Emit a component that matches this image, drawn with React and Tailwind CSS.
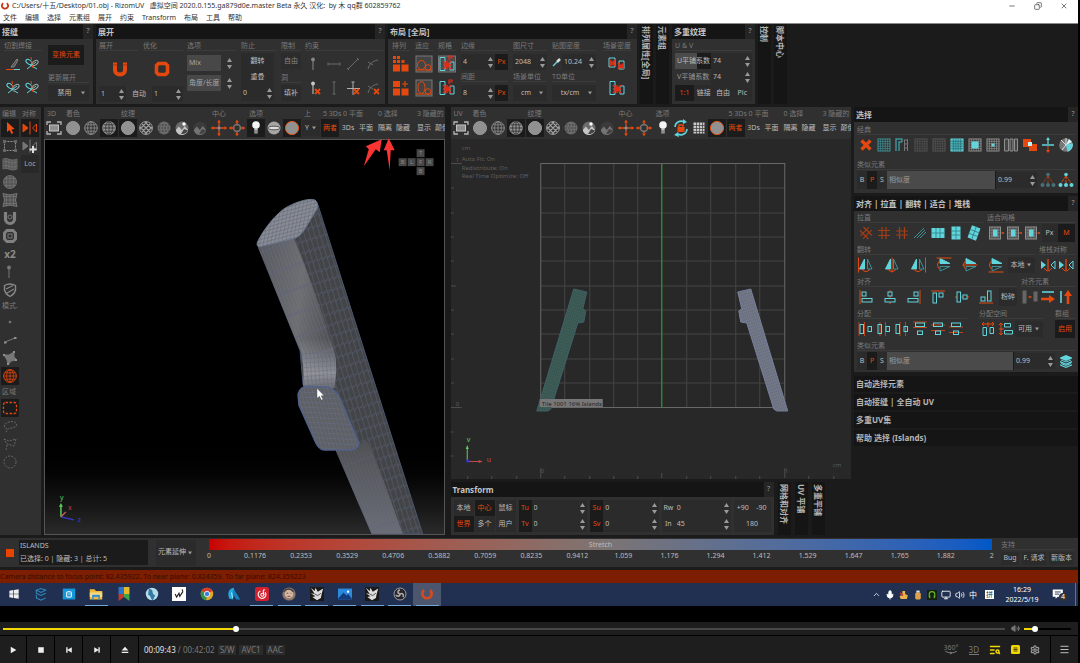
import clsx from 'clsx';
import { Mic, Monitor, Volume2, Settings, Menu, ChevronUp, Minus, Copy, X, TextSearch } from 'lucide-react';

const O = '#e4480e';
const C = '#62d4dc';
const T = '#3f8f96';
const W = '#8f8f8f';
const D = '#666666';

function Svg({ children, className = 'size-[18px]' }) {
  return <svg viewBox="0 0 18 18" className={className} fill="none" strokeWidth="1">{children}</svg>;
}

/* ---------- icon set ---------- */

const meshLines = 'M3 5.5h12M3 9h12M3 12.5h12M5.5 3v12M9 3v12M12.5 3v12';

const Frame = () => (
  <Svg>
    <path d="M2 6V3h4M12 3h4v3M16 12v3h-4M6 15H2v-3" stroke="#b5b5b5" strokeWidth="1.3" />
    <rect x="4.5" y="6" width="9" height="6" fill="#8f8f8f" stroke="#c4c4c4" />
  </Svg>
);
const Disc = ({ ring }) => <Svg><circle cx="9" cy="9" r="6.6" fill="#919191" stroke={ring ? '#e0531c' : '#919191'} /></Svg>;
const Wire = ({ fill = 'none', c = W }) => (
  <Svg>
    <circle cx="9" cy="9" r="6.3" stroke={c} fill={fill} />
    <path d="M2.7 9h12.6M9 2.7v12.6M4 5.8h10M4 12.2h10" stroke={fill === 'none' ? c : '#2c2c2c'} strokeWidth=".8" />
    <ellipse cx="9" cy="9" rx="3.4" ry="6.3" stroke={fill === 'none' ? c : '#2c2c2c'} strokeWidth=".8" />
  </Svg>
);
const Checker = ({ c = '#a0a0a0' }) => (
  <Svg>
    <circle cx="9" cy="9" r="6.4" stroke={c} />
    <path d="M5 5l8 8M3 8l7 7M8 3l7 7M13 5l-8 8M10 3l-7 7M15 8l-7 7" stroke={c} strokeWidth="1.2" />
  </Svg>
);
const Dots = () => (
  <Svg>
    <circle cx="9" cy="9" r="6.5" fill="#6a6a6a" />
    <path d="M4 6h10M3.5 9h11M4 12h10" stroke="#3a3a3a" strokeDasharray="1.5 1.5" />
  </Svg>
);
const Scene = ({ dim }) => (
  <Svg>
    <circle cx="9" cy="9" r="6.5" fill={dim ? '#3b3b3b' : '#6b6b6b'} />
    <path d="M2.8 11l3-3.5 3 3.5 3-4 3.4 4.3A6.5 6.5 0 0 1 3 12z" fill={dim ? '#747474' : '#c5c5c5'} />
    <path d="M8 15l3-5 4 1.5A7 7 0 0 1 8 15z" fill="#444" />
    {!dim && <circle cx="11" cy="5" r="1.7" fill="#fff" />}
  </Svg>
);
const Cross = ({ ring }) => (
  <Svg>
    <path d="M9 1.5v5M9 11.5v5M1.5 9h5M11.5 9h5" stroke={O} strokeWidth="1.3" />
    <path d="M7 3.5L9 1l2 2.5zM7 14.5L9 17l2-2.500zM3.500 7L1 9l2.500 2zM14.500 7L17 9l-2.500 2z" fill={O} />
    {ring ? <circle cx="9" cy="9" r="3.500" stroke="#777" strokeWidth="1.400" /> : <path d="M9 6.500v5M6.500 9h5" stroke="#d6a18b" />}
  </Svg>
);
const Bulb = () => (
  <Svg><circle cx="9" cy="6" r="3.8" fill="#f4f4f4" /><path d="M7.400 9h3.200v5.500h-3.200z" fill="#c9c9c9" /><path d="M7.500 12h3M7.500 14h3" stroke="#555" /></Svg>
);
const Half = () => (
  <Svg><circle cx="9" cy="9" r="6.500" fill="#a5a5a5" /><ellipse cx="9" cy="9" rx="6" ry="1.800" fill="#ddd" stroke="#555" /></Svg>
);
const Lock = () => (
  <Svg>
    <path d="M3 8a6 6 0 0 1 9-5M15 10a6 6 0 0 1-9 5" stroke={C} strokeWidth="1.600" />
    <path d="M11 0l4 3-4 2zM7 18l-5-2 4-3z" fill={C} />
    <rect x="5.500" y="8" width="7" height="5" fill={O} /><path d="M7 8V6h4v2" stroke={O} strokeWidth="1.300" />
  </Svg>
);
const Table = () => <Svg><rect x="3.500" y="3.500" width="11" height="11" fill="#c8c8c8" /><path d="M3 6.500h12M3 9.500h12M3 12.500h12M6.500 3v12M9.500 3v12M12.500 3v12" stroke="#3a3a3a" strokeWidth=".7" /></Svg>;

const Knife = () => <Svg><path d="M2 14.500h8" stroke={O} /><path d="M10 14.500h6" stroke={C} /><path d="M7 12l6-8 1 1-4 7z" stroke="#888" fill="#4a4a4a" /></Svg>;
const Weld = () => (
  <Svg>
    <ellipse cx="6" cy="7" rx="3.500" ry="2" transform="rotate(35 6 7)" stroke={C} />
    <ellipse cx="12" cy="8" rx="3.500" ry="2" transform="rotate(-35 12 8)" stroke="#9aa" />
    <path d="M4 14l9-7M7 10l7 4" stroke={C} /><path d="M8 2l2 12" stroke={O} strokeDasharray="3 1" />
  </Svg>
);

const Unfold = () => <Svg><path d="M4 2.500v7.500a5 4.500 0 0 0 10 0V2.500" stroke={O} strokeWidth="4" /><path d="M2 5h4M12 5h4" stroke="#a8350c" /></Svg>;
const Optimize = () => <Svg><path d="M5.500 3.500h7l2 2v7l-2 2h-7l-2-2v-7z" stroke={O} strokeWidth="3.600" /></Svg>;

const Pin = ({ x, c = '#868686' }) => <Svg><path d="M8 6v9" stroke={c} /><circle cx="8" cy="4.500" r="1.900" fill={c} />{x && <path d="M10 10l5 5M15 10l-5 5" stroke={O} strokeWidth="1.800" />}</Svg>;
const Seg = ({ d, x, c = '#6a6a6a' }) => <Svg><path d={d} stroke={c} />{x && <path d="M10 10l5 5M15 10l-5 5" stroke={O} strokeWidth="1.800" />}</Svg>;

const Pack = ({ plus }) => (
  <Svg>
    <path d="M1 9.500h7v7H1zM9.500 9.500h7v7h-7z" fill={O} />
    {plus ? <path d="M1 2h7v6H1z" fill={O} /> : <path d="M1 1h3v3H1zM5 1h3v3H5zM1 5h3v3H1zM5 5h3v3H5zM9.500 5h3v3h-3z" fill={O} />}
    {plus && <path d="M13 2v6M10 5h6" stroke={O} strokeWidth="1.200" />}
  </Svg>
);
const Fit = ({ big }) => (
  <Svg>
    <rect x="1" y="1" width="16" height="16" fill="#444" stroke="#777" />
    <ellipse cx="6.500" cy={big ? 8.500 : 10} rx={big ? 3.500 : 4} ry={big ? 6 : 4.500} stroke={O} />
    <circle cx="13" cy="12.500" r="2.800" stroke={O} />
    <path d="M1 15h16" stroke={O} />
  </Svg>
);
const Spec = ({ top, frame }) => (
  <Svg>
    {frame && <rect x=".5" y="1" width="17" height="16" fill="#4a4a4a" stroke="#777" />}
    <path d="M2 2.500h5v13H2zM12 7h4v8h-4z" stroke={C} />
    <path d="M5 6l8 8M13 6l-8 8M9 6v8M5 10h8" stroke="#e32b14" strokeWidth="1.500" />
    {top && <path d="M11 5V1h3v2h-3" stroke="#e32b14" strokeWidth="1.200" />}
  </Svg>
);
const Dense = () => (
  <Svg>
    <path d="M1 3h6v9H1zM11 6h5v8h-5z" stroke={C} />
    <path d="M2 5l5 6M7 5l-5 6M2 8h5M10 8l6 6M16 8l-6 6M10 11h6" stroke="#e32b14" strokeWidth="1.600" />
  </Svg>
);

const Pointer = () => <Svg><path d="M6 3v10l2.500-2 2 4 1.800-1-1.800-3.600 3.200-.4z" fill="#f04e12" /></Svg>;
const Mirror = ({ c = O, plus }) => (
  <Svg><path d="M2 5v8l5-4z" fill={c} stroke={c} /><path d="M15.500 5v8l-4-4z" stroke={c} /><path d="M9 2.500v13" stroke={c} />{plus && <path d="M12 9v7M8.500 12.500h7" stroke="#ddd" strokeWidth="2" />}</Svg>
);
const SelBox = () => <Svg><rect x="3.500" y="4.500" width="11" height="9" stroke={W} strokeDasharray="2 1" /><path d="M2 3h3v3H2zM13 3h3v3h-3zM2 12h3v3H2zM13 12h3v3h-3z" fill={D} /></Svg>;
const Flag = () => <Svg><path d="M2 4c5-2 8 3 14 0v10c-6 3-9-2-14 0z" fill="#555" stroke={D} /><path d="M5 3v11M8 4v10M11 5v10M14 5v10M2 7c5-2 8 3 14 0M2 11c5-2 8 3 14 0" stroke="#777" strokeWidth=".7" /></Svg>;
const Ball = () => <Svg><circle cx="9" cy="9" r="6.500" fill="#555" stroke="#6d6d6d" /><path d={meshLines} stroke="#777" strokeWidth=".6" /></Svg>;
const Pinch = () => <Svg><path d="M2 2.500q7 3 14 0q-3 6.500 0 13q-7-3-14 0q3-6.500 0-13z" fill="#505050" stroke="#777" /><path d={meshLines} stroke="#777" strokeWidth=".7" /></Svg>;
const UGrey = () => <Svg><path d="M4.500 3v7a4.500 4.500 0 0 0 9 0V3" stroke="#808080" strokeWidth="3.200" /><circle cx="9" cy="8" r="2" stroke="#777" /></Svg>;
const OGrey = () => <Svg><path d="M6 3.500h6l2.500 2.500v6L12 14.500H6L3.500 12V6z" stroke="#808080" strokeWidth="3" /><rect x="7" y="7" width="4" height="4" stroke="#777" /></Svg>;
const Shield = () => <Svg><path d="M3.500 4.500q5.500-3 11 0v4.500q-1 4-5.500 6.500-4.500-2.500-5.500-6.500z" stroke="#888" strokeWidth="1.400" /><path d="M5 8l7-3.500M6 12l7-4" stroke="#888" strokeWidth="1.200" /></Svg>;
const Vertex = () => <Svg><circle cx="9" cy="9" r="1.300" fill="#777" /></Svg>;
const Edge = () => <Svg><path d="M4 11l10-4" stroke="#777" /><path d="M3 10.500h2.500v2H3zM13 6h2.500v2H13z" fill={W} /></Svg>;
const Poly = () => <Svg><path d="M3 6l5 0 5-3 0 5 3 3-6 1-3 4-1-5z" fill="#777" stroke="#777" /><path d="M2 5h2v2H2zM12 2h2v2h-2zM14 10h2v2h-2zM6 14h2v2H6z" fill={W} /></Svg>;
const Marquee = () => <Svg><rect x="2.500" y="3.500" width="13" height="11" rx="2" stroke={O} strokeWidth="1.300" strokeDasharray="2.500 1.500" /></Svg>;
const Lasso = ({ angular }) => <Svg><path d={angular ? 'M3 4l5 2 7-2-2 7-7-2-3-5M6 10l-1 5' : 'M6 12c-7-3 1-9 7-7s1 7-5 6l-3 4'} stroke={D} strokeDasharray="2 1.200" /></Svg>;
const Ring = () => <Svg><circle cx="9" cy="9" r="6" stroke={D} strokeDasharray="2 1.200" /></Svg>;

const Grid = ({ c = W, core, fill, dot }) => (
  <Svg>
    {fill && <rect x="3" y="3" width="12" height="12" fill={fill} />}
    <rect x="3" y="3" width="12" height="12" stroke={c} />
    <path d="M3 5.400h12M3 7.800h12M3 10.200h12M3 12.600h12M5.400 3v12M7.800 3v12M10.200 3v12M12.600 3v12" stroke={fill ? '#2b6f75' : c} strokeWidth=".7" />
    {core && <rect x="5.500" y="5.500" width="7" height="7" fill={C} />}
    {dot && <rect x="7.500" y="7.500" width="3" height="3" fill={C} />}
  </Svg>
);
const Delete = () => <Svg><path d="M4.500 4.500l9 9M13.500 4.500l-9 9" stroke={O} strokeWidth="3.200" /></Svg>;
const GrowEdge = () => <Svg><path d="M3 15V3h6v3M6 15V6h3" stroke={T} strokeWidth="1.500" /><path d="M11.500 15V4M14.500 15V3M11 4h4M11 8h4M11 12h4" stroke="#777" /></Svg>;
const Cols = () => <Svg><path d="M2.500 3h4v12h-4zM8 3h3v12H8zM12.500 3h3v12h-3z" stroke={W} fill="#444" /></Svg>;
const Overlap = () => <Svg><path d="M2 3h8v8H2zM8 8h8v7H8z" fill={O} /><rect x="7" y="6" width="4" height="4" fill="#bff4f7" /></Svg>;
const Split = () => <Svg><path d="M3 9h12M9 2v6" stroke={C} strokeWidth="1.300" /><path d="M9 10v5" stroke={O} /><path d="M7 4l2-3 2 3z" fill={C} /><path d="M7 14l2 3 2-3z" fill={O} /></Svg>;
const Pie = () => <Svg><circle cx="9" cy="9" r="6.800" fill="#777" /><path d="M9 9L4 4M9 9v-7M9 9h7M9 9l-4 5" stroke="#ddd" /><path d="M9 9l6.500-2a6.800 6.800 0 0 1-5 8.700z" fill={C} /><path d="M9 9l3-6 3 3z" fill="#d8fafa" /></Svg>;
const Tree = ({ dim }) => <Svg><path d="M9 5L4 12M9 5v7M9 5l5 7" stroke={O} strokeDasharray="3 1" opacity={dim ? .6 : 1} /><g fill={dim ? '#467075' : C}><circle cx="9" cy="3.500" r="1.800" /><circle cx="3.500" cy="14" r="2" /><circle cx="9" cy="14" r="2" /><circle cx="14.500" cy="14" r="2" /></g></Svg>;

const Hash = ({ r = 0, c = '#a43c16' }) => <Svg><g transform={`rotate(${r} 9 9)`} stroke={c} strokeWidth="1.200"><path d="M3 6.500h12M3 11.500h12" /><path d="M7 3v12M11 3v12" /></g></Svg>;
const Hatch = () => <Svg><path d="M3 14L13 4M6 14l8-8M9 14l6-6" stroke={T} /></Svg>;
const Block = ({ v, r = 0 }) => <Svg><g transform={`rotate(${r} 9 9)`}><rect x={v ? 4.500 : 2.500} y={v ? 2.500 : 4} width={v ? 9 : 13} height={v ? 13 : 10} fill={C} /><path d={v ? 'M9 2v14M4 7h10M4 11h10' : 'M2 9h14M7 4v10M11 4v10'} stroke="#2e8087" strokeWidth=".8" /></g></Svg>;
const FitGrid = () => <Svg><rect x="2.500" y="3" width="11" height="12" stroke={W} fill="#4b4b4b" /><path d="M2 6h12M2 9h12M2 12h12M5 3v12M8 3v12M11 3v12" stroke={W} strokeWidth=".6" /><rect x="6" y="5.500" width="4.500" height="7" fill={C} /><path d="M14.500 9h2.500" stroke={O} strokeWidth="1.600" /></Svg>;
const FlipI = ({ r = 0, x = 9 }) => (
  <Svg>
    <g transform={`rotate(${r} 9 9)`}>
      <path d="M7.500 3v10H2.500z" fill={C} stroke={C} /><path d="M10.500 3v10h4.500z" stroke={T} />
      <path d={`M${x} 1.500v15`} stroke={O} /><path d="M5 13.500q4 4 8 0" stroke={O} />
    </g>
  </Svg>
);
const StackI = () => <Svg><path d="M2 5v8l5-4z" fill={C} /><path d="M16 5v8l-4-4z" stroke={C} /><path d="M9 3v11" stroke={O} strokeWidth="1.300" /><path d="M5 12q4 6 8 0" stroke={O} /></Svg>;
const AlignI = ({ r = 0, x = 3 }) => (
  <Svg><g transform={`rotate(${r} 9 9)`}><path d={`M${x} 2v14`} stroke={O} /><g transform={x > 10 ? 'matrix(-1 0 0 1 18 0)' : undefined}><rect x={x > 5 && x < 10 ? 7 : 5} y="4" width="4" height="4" stroke={C} fill="#303030" /><rect x={x > 5 && x < 10 ? 4 : 5} y="10.500" width="10" height="3.500" stroke={C} fill="#303030" /></g></g></Svg>
);
const SpreadI = ({ r = 0, dx = 0 }) => <Svg><g transform={`rotate(${r} 9 9)`}><path d={`M${7 + dx} 2v14M${12.500 + dx} 2v14`} stroke={O} strokeWidth=".8" /><rect x="3" y="4.500" width="3.500" height="9" stroke={C} /><rect x="11" y="6.500" width="3.500" height="5" stroke={C} /></g></Svg>;
const SpaceI = ({ r = 0 }) => <Svg><g transform={`rotate(${r} 9 9)`}><path d="M3 4h12M5 2L3 4l2 2M9 2v5M13 2l2 2-2 2" stroke={O} /><path d="M4 7.500h3.500v8H4zM11 7.500h3.500v6H11z" stroke={C} /></g></Svg>;
const MatchI = () => <Svg><path d="M1.500 2.500h4v13h-4zM12.500 3.500h4v10h-4z" fill="#666" /><path d="M7.500 9h3" stroke={O} strokeWidth="1.500" /></Svg>;
const ArrowI = ({ r = 0 }) => <Svg><g transform={`rotate(${r} 9 9)`}><path d="M3 4h12" stroke={C} strokeWidth="1.600" /><path d="M2 11h9" stroke={O} strokeWidth="2.600" /><path d="M10 7l6 4-6 4z" fill={O} /></g></Svg>;
const Layers = () => <Svg><path d="M3 5.500L9 3l6 2.500v1L9 9 3 6.500zM3 9l6 2.500L15 9v1.500L9 13l-6-2.500zM3 12.300l6 2.500 6-2.500v1.200L9 16l-6-2.500z" fill={C} /><path d="M4 8l5 2 5-2M4 11.500l5 2 5-2" stroke={C} /></Svg>;

/* ---------- shared controls ---------- */

function Tool({ label, on, className, children }) {
  return (
    <button aria-label={label} className={clsx('flex h-[18px] w-[18px] shrink-0 items-center justify-center whitespace-nowrap text-[7px]', on && 'bg-[#1b1b1b]', className)}>
      {children}
    </button>
  );
}

function Btn({ on, className, children }) {
  return (
    <button className={clsx('flex h-4 shrink-0 items-center justify-center whitespace-nowrap text-[7px]', on ? 'bg-[#1b1b1b] text-[#e4480e]' : 'bg-[#2b2b2b] text-[#bdbdbd]', className)}>
      {children}
    </button>
  );
}

function Label({ className, children }) {
  return (
    <div className={clsx('h-2.5 border-b border-[#3b3b3b] text-[7px] leading-[9px] whitespace-nowrap text-[#7a7a7a]', className)}>
      {children}
    </div>
  );
}

function Arrows() {
  return (
    <span className="flex shrink-0 flex-col gap-[3px] px-0.5">
      <button aria-label="Increase"><svg viewBox="0 0 5 4" className="block h-1 w-[5px]"><path d="M0 4L2.500 0 5 4z" fill="#9a9a9a" /></svg></button>
      <button aria-label="Decrease"><svg viewBox="0 0 5 4" className="block h-1 w-[5px]"><path d="M0 0L2.500 4 5 0z" fill="#9a9a9a" /></svg></button>
    </span>
  );
}

function NumberBox({ label, value, className }) {
  return (
    <div className={clsx('flex h-4 items-center bg-[#2b2b2b] pl-0.5', className)}>
      <input aria-label={label} defaultValue={value} className="w-0 min-w-0 flex-1 bg-transparent text-[7px] text-[#bdbdbd]" />
      <Arrows />
    </div>
  );
}

function Select({ label, value, className }) {
  return (
    <div className={clsx('flex h-4 items-center bg-[#2b2b2b]', className)}>
      <select aria-label={label} className="h-4 w-0 min-w-0 flex-1 appearance-none bg-transparent text-center text-[7px] text-[#bdbdbd]">
        <option>{value}</option>
      </select>
      <svg viewBox="0 0 5 4" className="mr-1 h-1 w-1 shrink-0"><path d="M0 0L2.500 4 5 0z" fill="#9a9a9a" /></svg>
    </div>
  );
}

function Header({ title }) {
  return (
    <div className="flex h-[15px] shrink-0 items-center justify-between bg-[#151515] pl-0.5">
      <h2 className="text-[8px] font-bold whitespace-nowrap text-[#c4c4c4]">{title}</h2>
      <button className="h-full w-2.5 bg-[#252525] text-[7px] text-[#9a9a9a]">?</button>
    </div>
  );
}

function Panel({ title, className, children }) {
  return (
    <section className={clsx('flex shrink-0 flex-col bg-[#303030]', className)}>
      <Header title={title} />
      {children}
    </section>
  );
}

function SideTab({ children }) {
  return (
    <button className="flex w-[13px] shrink-0 items-center bg-[#151515] pt-0.5 text-[8px] leading-[13px] font-bold whitespace-nowrap text-[#b5b5b5] [text-orientation:sideways] [writing-mode:vertical-rl]">
      {children}
    </button>
  );
}

/* ---------- top area ---------- */

const MENUS = ['文件', '编辑', '选择', '元素组', '展开', '约束', 'Transform', '布局', '工具', '帮助'];

function TitleBar() {
  return (
    <header className="h-6 shrink-0 border-b border-[#8a8a8a] bg-white text-[#333]">
      <div className="flex h-3 items-center gap-[3px]">
        <svg viewBox="0 0 18 18" className="ml-px h-2.5 w-2 shrink-0" fill="none"><path d="M5 3a7 6.500 0 1 0 8 0" stroke="#c73515" strokeWidth="4" /></svg>
        <h1 className="flex-1 text-[7px] leading-3 whitespace-pre">C:/Users/十五/Desktop/01.obj - RizomUV   虚拟空间 2020.0.155.ga879d0e.master Beta 永久 汉化:  by 木 qq群 602859762</h1>
        <div className="mr-2.5 flex gap-[18px]">
          <button aria-label="Minimize"><Minus size={8} strokeWidth={2} /></button>
          <button aria-label="Restore"><Copy size={8} strokeWidth={2} className="-scale-x-100" /></button>
          <button aria-label="Close"><X size={8} strokeWidth={2} /></button>
        </div>
      </div>
      <nav className="flex h-[11px] items-center gap-2 pl-[3px] text-[7px]">
        {MENUS.map((m) => <button key={m} className="leading-[10px]">{m}</button>)}
      </nav>
    </header>
  );
}

function SeamPanel() {
  return (
    <Panel title="接缝" className="w-[93px]">
      <div className="flex justify-between pt-0.5 pr-1 pl-1">
        <div className="w-[38px]">
          <Label>切割焊接</Label>
          <div className="grid grid-cols-2 gap-y-1.5 pt-1">
            <Tool label="Cut"><Knife /></Tool>
            <Tool label="Weld"><Weld /></Tool>
            <Tool label="Cut all"><Weld /></Tool>
            <Tool label="Weld all"><Weld /></Tool>
          </div>
        </div>
        <div className="w-[41px]">
          <Btn on className="mt-1 h-5 w-9">变换元素</Btn>
          <Label className="mt-2">更新展开</Label>
          <Select label="更新展开" value="禁用" className="mt-0.5" />
        </div>
      </div>
    </Panel>
  );
}

function UnfoldPanel() {
  return (
    <Panel title="展开" className="w-[289px]">
      <div className="flex gap-1 pt-0.5 pr-0.5 pl-[3px]">
        <div className="w-[84px]">
          <div className="flex gap-1">
            <Label className="flex-1">展开</Label>
            <Label className="flex-1">优化</Label>
          </div>
          <div className="flex h-[35px] items-center">
            <Tool label="展开" className="flex-1"><Unfold /></Tool>
            <Tool label="优化" className="flex-1"><Optimize /></Tool>
          </div>
          <div className="flex items-center">
            <NumberBox label="展开" value="1" className="w-[27px]" />
            <span className="mx-1.5 text-[7px] text-[#bdbdbd]">自动</span>
            <NumberBox label="优化" value="1" className="flex-1" />
          </div>
        </div>
        <div className="w-[50px] space-y-1">
          <Label>选项</Label>
          {['Mix', '角度/长度'].map((v) => (
            <div key={v} className="flex h-4 items-center gap-1">
              <select aria-label="选项" className="h-4 w-[34px] appearance-none bg-[#484848] pl-0.5 text-[7px] text-[#a5a5a5]"><option>{v}</option></select>
              <Arrows />
            </div>
          ))}
        </div>
        <div className="w-9">
          <Label>防止</Label>
          <Btn className="mt-0.5 w-[33px]">翻转</Btn>
          <Btn className="w-[33px]">重叠</Btn>
          <NumberBox label="防止" value="0" className="w-[33px]" />
        </div>
        <div className="w-5">
          <Label>限制</Label>
          <Btn className="mt-0.5 w-full opacity-60">自由</Btn>
          <Label className="mt-1">洞</Label>
          <Btn className="mt-0.5 w-full">填补</Btn>
        </div>
        <div className="flex-1">
          <Label>约束</Label>
          <div className="grid grid-cols-4 gap-y-1.5 pt-1">
            <Tool label="Pin"><Pin /></Tool>
            <Tool label="Horizontal"><Seg d="M3 9h12M3 7.500v3M15 7.500v3" /></Tool>
            <Tool label="Diagonal"><Seg d="M4 14L14 4M3 13l2 2M13 3l2 2" /></Tool>
            <Tool label="Angle"><Seg d="M4 14Q6 6 14 5M4 7l5 3" /></Tool>
            <Tool label="Unpin"><Pin x c="#c8c8c8" /></Tool>
            <Tool label="Vertical"><Seg d="M9 3v12M7.500 3h3M7.500 15h3" /></Tool>
            <Tool label="Free axes"><Seg d="M9 3v13M3 9.500h13M7.500 3h3" x c="#b0b0b0" /></Tool>
            <Tool label="Free angle"><Seg d="M4 14Q6 6 14 5M4 7l5 3" x /></Tool>
          </div>
        </div>
      </div>
    </Panel>
  );
}

function IconPair({ label, a, b, className }) {
  return (
    <div className={className}>
      <Label>{label}</Label>
      <div className="space-y-1.5 pt-1">
        <Tool label={label}>{a}</Tool>
        <Tool label={`${label} 2`}>{b}</Tool>
      </div>
    </div>
  );
}

function PackPanel() {
  return (
    <Panel title="布局 [全局]" className="w-[249px]">
      <div className="flex gap-[5px] pt-0.5 pr-1 pl-1">
        <IconPair label="排列" a={<Pack />} b={<Pack plus />} className="w-[18px]" />
        <IconPair label="适应" a={<Fit />} b={<Fit big />} className="w-[18px]" />
        <IconPair label="规格" a={<Spec top frame />} b={<Spec top />} className="w-[18px]" />
        <div className="w-[47px]">
          <Label>边缘</Label>
          <div className="flex pt-[3px]"><NumberBox label="边缘" value="4" className="flex-1" /><Btn on className="w-[13px]">Px</Btn></div>
          <Label className="mt-0.5">间距</Label>
          <div className="flex pt-[3px]"><NumberBox label="间距" value="8" className="flex-1" /><Btn on className="w-[13px]">Px</Btn></div>
        </div>
        <div className="w-[34px]">
          <Label>图尺寸</Label>
          <NumberBox label="图尺寸" value="2048" className="mt-[3px]" />
          <Label className="mt-0.5">场景单位</Label>
          <Select label="场景单位" value="cm" className="mt-[3px]" />
        </div>
        <div className="w-[44px]">
          <Label>贴图密度</Label>
          <div className="mt-[3px] flex items-center">
            <svg viewBox="0 0 10 10" className="size-2.5 shrink-0"><path d="M1 9l4-4" stroke={C} strokeWidth="1.500" /><path d="M5 5l3-3" stroke="#ddd" strokeWidth="2.500" /></svg>
            <NumberBox label="贴图密度" value="10.24" className="flex-1" />
          </div>
          <Label className="mt-0.5">TD单位</Label>
          <Select label="TD单位" value="tx/cm" className="mt-[3px]" />
        </div>
        <IconPair label="场景密度" a={<Dense />} b={<Spec />} className="flex flex-1 flex-col items-center" />
      </div>
    </Panel>
  );
}

function TexturePanel() {
  return (
    <Panel title="多重纹理" className="w-[83px]">
      <div className="px-[3px] pt-0.5 text-[7px] text-[#bdbdbd]">
        <Label>U &amp; V</Label>
        <div className="mt-0.5 flex h-4 items-center">
          <span className="w-9 bg-linear-to-r from-[#4b4b4b] from-60% to-[#1b1b1b] to-60% pl-0.5 leading-4 whitespace-nowrap">U平铺系数</span>
          <NumberBox label="U平铺系数" value="74" className="flex-1" />
        </div>
        <div className="flex h-4 items-center">
          <span className="w-9 pl-0.5 leading-4 whitespace-nowrap text-[#999]">V平铺系数</span>
          <NumberBox label="V平铺系数" value="74" className="flex-1" />
        </div>
        <div className="flex">
          <Btn on className="w-[19px]">1:1</Btn>
          <Btn className="flex-1">链接</Btn>
          <Btn className="flex-1">自由</Btn>
          <Btn className="flex-1">Pic</Btn>
        </div>
      </div>
    </Panel>
  );
}

/* ---------- viewports ---------- */

function ToolGroup({ label, className, children }) {
  return (
    <div className={clsx('shrink-0', className)}>
      <div className="h-3 pl-0.5 text-[7px] leading-[13px] whitespace-nowrap text-[#7a7a7a]">{label}</div>
      <div className="flex">{children}</div>
    </div>
  );
}

function ViewTools({ uv }) {
  return (
    <div className="flex h-8 shrink-0 gap-px overflow-hidden bg-[#303030] px-px text-[#bdbdbd]">
      <ToolGroup label={uv ? 'UV' : '3D'}><Tool label="Frame"><Frame /></Tool></ToolGroup>
      <ToolGroup label="着色">
        <Tool label="Shaded"><Disc /></Tool>
        <Tool label="Wireframe"><Wire /></Tool>
        <Tool label="Shaded wireframe" on><Wire fill="#929292" /></Tool>
      </ToolGroup>
      <ToolGroup label="纹理">
        <Tool label="No texture" on><Disc /></Tool>
        <Tool label="Checker"><Checker /></Tool>
        <Tool label="Dots"><Dots /></Tool>
        <Tool label="Image"><Scene /></Tool>
        <Tool label="Image only"><Scene dim /></Tool>
      </ToolGroup>
      <ToolGroup label="中心">
        <Tool label="Center"><Cross /></Tool>
        <Tool label="Center selection"><Cross ring /></Tool>
      </ToolGroup>
      <ToolGroup label="选项">
        <Tool label="Light" on={!uv}><Bulb /></Tool>
        {uv ? <Tool label="Sync lock"><Lock /></Tool> : <Tool label="Half"><Half /></Tool>}
        {uv && <Tool label="Grid"><Table /></Tool>}
        <Tool label="Silhouette" on><Disc ring /></Tool>
      </ToolGroup>
      {!uv && <ToolGroup label="上"><Select label="上" value="Y" className="mt-px w-[18px]" /></ToolGroup>}
      <ToolGroup label="5 3Ds 0 平面">
        <Tool on className="text-[#e4480e]">两者</Tool>
        <Tool>3Ds</Tool>
        <Tool>平面</Tool>
      </ToolGroup>
      <ToolGroup label="0 选择" className="w-[38px]"><Tool>隔离</Tool><Tool className="w-5">隐藏</Tool></ToolGroup>
      <ToolGroup label="3 隐藏的"><Tool className="w-4">显示</Tool><Tool className="w-4">颠倒</Tool></ToolGroup>
    </div>
  );
}

const CUBE = [['T', 417, 148], ['B', 399, 157], ['L', 408, 157], ['F', 417, 157], ['R', 426, 157], ['B', 417, 166]];
const BODY = 'M318 204L423 534H372L336 450 303 384 300 350 258 246 296 234z';
const FRONT = 'M257 244L293 236Q303 258 324 318L336 355V388L303 386Q305 372 301 352z';
const BUMP = 'M298 394Q300 386 308 386L328 387Q337 390 341 400L359 443Q359 449 352 450H324Q319 449 316 443L299 405z';

function View3D() {
  return (
    <div className="flex min-w-0 flex-1 flex-col">
      <ViewTools />
      <div className="flex min-h-0 flex-1 border border-[#555] bg-linear-to-b from-black from-75% to-[#2a2a2a]">
        <svg viewBox="44 139 400 395" className="h-full w-full overflow-visible" preserveAspectRatio="xMidYMid meet">
          <defs>
            <linearGradient id="front" x1="0" y1="0" x2="1" y2="0.2">
              <stop offset="0" stopColor="#56585f" /><stop offset="0.600" stopColor="#6d6e72" /><stop offset="1" stopColor="#515257" />
            </linearGradient>
            <linearGradient id="low" x1="0" y1="0" x2="0" y2="1">
              <stop offset="0" stopColor="#505155" /><stop offset="1" stopColor="#6a6d77" />
            </linearGradient>
            <linearGradient id="bend" x1="0" y1="0" x2="0" y2="1">
              <stop offset="0" stopColor="#a5a8b0" stopOpacity="0" /><stop offset="0.700" stopColor="#b5b8be" stopOpacity=".6" /><stop offset="1" stopColor="#a0a3ab" stopOpacity=".3" />
            </linearGradient>
            <pattern id="sideMesh" width="5" height="11" patternUnits="userSpaceOnUse" patternTransform="rotate(-17.400)">
              <path d="M0 0V11" stroke="#667083" strokeWidth=".7" /><path d="M0 3l5-3" stroke="#58627a" strokeWidth=".7" />
            </pattern>
            <pattern id="frontMesh" width="3.500" height="23" patternUnits="userSpaceOnUse" patternTransform="rotate(-20)">
              <path d="M0 0V23" stroke="#7b7f8a" strokeWidth=".5" /><path d="M0 4h4" stroke="#5b657e" strokeWidth=".8" />
            </pattern>
            <pattern id="capMesh" width="4" height="3.500" patternUnits="userSpaceOnUse" patternTransform="rotate(-15) skewX(-25)">
              <rect width="4" height="3.500" fill="#888b93" /><path d="M0 0h4M0 0v3.500" stroke="#5d6474" strokeWidth=".9" />
            </pattern>
            <pattern id="bendMesh" width="4" height="4.500" patternUnits="userSpaceOnUse" patternTransform="rotate(-4)">
              <path d="M0 0h4M0 0v4.500" stroke="#5d6577" strokeWidth=".7" />
            </pattern>
            <pattern id="bumpMesh" width="4" height="5" patternUnits="userSpaceOnUse" patternTransform="rotate(3) skewX(20)">
              <path d="M0 0h4M0 0v5" stroke="#6a7692" strokeWidth=".6" />
            </pattern>
          </defs>
          <path d={BODY} fill="#424447" />
          <path d={BODY} fill="url(#sideMesh)" stroke="#4a566e" />
          <path d={FRONT} fill="url(#front)" />
          <path d={FRONT} fill="url(#frontMesh)" />
          <path d="M299 342q16-6 32-4l5 22q1 14-2 28l-31-2q2-22-4-44z" fill="url(#bend)" />
          <path d="M301 352q16-6 33-3l2 12q0 18-4 28l-29-3q2-18-2-34z" fill="url(#bendMesh)" />
          <path d="M257 242C262 230 277 211 287 206C298 200 310 197 315 199Q319 202 317 208L304 229Q299 237 292 238L259 246Q256 245 257 242z" fill="url(#capMesh)" stroke="#6c7890" />
          <path d="M336 450L358 449Q362 439 368 442 374 452 403 534H372z" fill="url(#low)" />
          <path d="M336 450L358 449 372 452 403 534H372z" fill="url(#frontMesh)" opacity=".5" />
          <path d={BUMP} fill="#5e6065" />
          <path d={BUMP} fill="url(#bumpMesh)" stroke="#516187" strokeWidth="1.500" />
          <path d="M317 388v10l2.500-2 2 4 1.500-1-1.800-3.500h3z" fill="#fff" stroke="#444" strokeWidth=".4" />
          <g fill="#fb3434">
            <path d="M382 138L380 151 376 148 364 165 369 148 366 145z" />
            <path d="M389 137L395 149H391L390 169 387 149H384z" />
          </g>
          {CUBE.map(([t, x, y], i) => (
            <g key={i}>
              <rect x={x} y={y} width="8" height="8" fill="#484848" />
              <text x={x + 4} y={y + 6} textAnchor="middle" fontSize="6" fill="#8a8a8a">{t}</text>
            </g>
          ))}
          <path d="M60 517V506" stroke="#5ecb5e" strokeWidth="1.500" /><path d="M58 507l2-4 2 4z" fill="#5ecb5e" />
          <path d="M60 517l13 3" stroke="#3939d0" strokeWidth="1.300" /><path d="M60 517l5-5" stroke="#d86060" strokeWidth="1.300" />
          <text x="59" y="500" fontSize="7" fill="#5ecb5e">y</text>
          <text x="77" y="522" fontSize="7" fill="#3939d0">z</text>
          <text x="67" y="510" fontSize="7" fill="#c83838">x</text>
        </svg>
      </div>
    </div>
  );
}

const GRID_X = [564, 589, 613, 637, 686, 710, 735, 759];
const GRID_Y = [188, 213, 237, 261, 286, 310, 334, 359, 383];
const ISLAND = 'M573 289L586 292 582 309 585 311 583 322 577 323 550 409 547 411H536L540 398z';

function ViewUV() {
  return (
    <div className="flex min-h-0 flex-1 flex-col">
      <ViewTools uv />
      <div className="flex min-h-0 flex-1 bg-[#282828]">
        <svg viewBox="450 139 401 340" className="h-full w-full" preserveAspectRatio="xMidYMid slice" fontSize="6" fill="#5e5e5e">
          <defs>
            <pattern id="isle" width="2" height="3" patternUnits="userSpaceOnUse" patternTransform="rotate(18)"><path d="M0 0v3M0 0h2" stroke="#456a6c" strokeWidth=".6" /></pattern>
            <pattern id="isle2" width="2" height="3" patternUnits="userSpaceOnUse" patternTransform="rotate(18)"><path d="M0 0v3M0 0h2" stroke="#8089a3" strokeWidth=".6" /></pattern>
          </defs>
          <path d={GRID_X.map((x) => `M${x} 164v243`).join('') + GRID_Y.map((y) => `M540 ${y}h244`).join('')} stroke="#454545" />
          <rect x="540" y="163.500" width="244" height="244" fill="none" stroke="#686868" />
          <path d="M661 164v244" stroke="#2f8f35" strokeWidth="1.300" />
          <path d={ISLAND} fill="#38544d" /><path d={ISLAND} fill="url(#isle)" stroke="#3f6169" />
          <g transform="matrix(-1 0 0 1 1323 0)"><path d={ISLAND} fill="#6a6e7a" /><path d={ISLAND} fill="url(#isle2)" stroke="#757f9b" /></g>
          <rect x="539" y="399" width="63" height="8" fill="#777" />
          <text x="541" y="406" fill="#222">Tile 1001 16%  Islands</text>
          <text x="461" y="150">cm</text>
          <text x="461" y="161">Auto Fit: On</text>
          <text x="461" y="169.500">Redistribute: On</text>
          <text x="461" y="178">Real Time Optimize: Off</text>
          <text x="455" y="162">1</text>
          <text x="455" y="406">0</text>
          <text x="540" y="473">0</text><text x="784" y="473">1</text><text x="832" y="467">cm</text>
          <path d="M450 163.500h11M450 407.500h11M450 188h3M450 213h3M450 237h3M450 261h3M450 286h5M450 310h3M450 334h3M450 359h3M450 383h3M450 432h3M450 456h3M540 468v10M661 473v5M784 468v10M467 476v3M491 476v3M516 476v3M564 476v3M589 476v3M613 476v3M637 476v3M686 476v3M710 476v3M735 476v3M759 476v3M808 476v3M833 476v3" stroke="#4d4d4d" />
          <path d="M466.500 461V448" stroke="#5fd05f" /><path d="M465 449l1.500-4 1.500 4z" fill="#5fd05f" />
          <path d="M467 461.500h12" stroke="#c24c4c" /><path d="M478 460l4 1.500-4 1.500z" fill="#c24c4c" />
          <circle cx="467" cy="461" r="1.700" fill="#3434c8" />
          <text x="466" y="442" fill="#5fd05f" fontSize="7">v</text><text x="486" y="462" fill="#c24c4c" fontSize="7">u</text>
        </svg>
      </div>
    </div>
  );
}

const AXES = [['Tu', '0', 'Tv', '0', true], ['Su', '0', 'Sv', '0', true], ['Rw', '0', 'In', '45', false]];

function TransformPanel() {
  return (
    <div className="flex h-[53px] shrink-0 gap-1">
      <Panel title="Transform" className="w-[323px]">
        <div className="flex flex-1 items-center gap-[3px] px-[3px]">
          <div className="grid w-[62px] grid-cols-3 gap-x-px">
            <Btn>本地</Btn><Btn on>中心</Btn><Btn>鼠标</Btn>
            <Btn on>世界</Btn><Btn>多个</Btn><Btn>用户</Btn>
          </div>
          {AXES.map(([a, av, b, bv, on]) => (
            <div key={a} className="grid flex-1 grid-cols-[13px_1fr]">
              <Btn on={on}>{a}</Btn><NumberBox label={a} value={av} />
              <Btn on={on}>{b}</Btn><NumberBox label={b} value={bv} />
            </div>
          ))}
          <div className="grid w-[37px] grid-cols-2">
            <Btn>+90</Btn><Btn>-90</Btn>
            <Btn className="col-span-2">180</Btn>
          </div>
        </div>
      </Panel>
      <SideTab>网格和对齐</SideTab>
      <SideTab>UV 平铺</SideTab>
      <SideTab>多重平铺</SideTab>
    </div>
  );
}

/* ---------- left tools ---------- */

const EDIT = [[<Pointer />, true], [<SelBox />], [<Flag />], [<Ball />], [<Pinch />], [<UGrey />], [<OGrey />]];
const MODES = [[<Vertex />], [<Edge />], [<Poly />], [<Wire c={O} />, true]];
const AREAS = [[<Marquee />, true], [<Lasso />], [<Lasso angular />], [<Ring />]];

function LeftTools() {
  return (
    <aside className="flex w-[41px] shrink-0 gap-0.5 bg-[#303030] pl-px text-[7px] text-[#7a7a7a]">
      <div className="w-[18px]">
        <div className="h-3 pl-px leading-[13px]">编辑</div>
        {EDIT.map(([icon, on], i) => <Tool key={i} label={`Edit ${i + 1}`} on={on}>{icon}</Tool>)}
        <Tool><span className="text-[10px] font-bold text-[#8a8a8a]">x2</span></Tool>
        <Tool label="Pin"><Pin c="#777" /></Tool>
        <Tool label="Protect"><Shield /></Tool>
        <div className="h-[14px] pl-px leading-[14px] whitespace-nowrap">模式.</div>
        {MODES.map(([icon, on], i) => <Tool key={i} label={`Mode ${i + 1}`} on={on}>{icon}</Tool>)}
        <div className="h-[14px] pl-px leading-[14px]">区域</div>
        {AREAS.map(([icon, on], i) => <Tool key={i} label={`Area ${i + 1}`} on={on}>{icon}</Tool>)}
      </div>
      <div className="w-[18px]">
        <div className="h-3 pl-px leading-[13px]">对称</div>
        <Tool label="Symmetry" on><Mirror /></Tool>
        <Tool label="Add symmetry"><Mirror c="#777" plus /></Tool>
        <Tool className="bg-[#292929] text-[#aaa]">Loc</Tool>
      </div>
    </aside>
  );
}

/* ---------- right column ---------- */

function Similar({ children }) {
  return (
    <div className="flex h-[18px] items-center text-[7px] text-[#bdbdbd]">
      <Btn className="h-[18px] w-2.5">B</Btn>
      <Btn on className="h-[18px] w-2.5">P</Btn>
      <Btn className="h-[18px] w-2.5">S</Btn>
      <label className="relative h-[18px] flex-1">
        <input type="range" min="0" max="1" step="0.01" defaultValue="1" className="block h-[18px] w-full appearance-none bg-[#4a4a4a] [&::-webkit-slider-thumb]:h-[18px] [&::-webkit-slider-thumb]:w-px [&::-webkit-slider-thumb]:appearance-none [&::-webkit-slider-thumb]:bg-[#1b1b1b]" />
        <span className="pointer-events-none absolute inset-y-0 left-0.5 leading-[18px] text-[#9a9a9a]">相似度</span>
      </label>
      <NumberBox label="相似度" value="0.99" className="mr-0.5 w-[41px]" />
      {children}
    </div>
  );
}

const CLASSIC = [
  <Delete />, <Grid c={T} />, <GrowEdge />, <Grid c="#505050" />, <Grid c="#555" />, <Grid c={C} fill="#49b3bb" />,
  <Grid core />, <Grid dot />, <Cols />, <Overlap />, <Split />, <Pie />,
];
const COLLAPSED = ['自动选择元素', '自动接缝 | 全自动 UV', '多重UV集', '帮助 选择 (Islands)'];

function IconRow({ icons, name, className }) {
  return (
    <div className={clsx('flex', className)}>
      {icons.map((icon, i) => <Tool key={i} label={`${name} ${i + 1}`}>{icon}</Tool>)}
    </div>
  );
}

function Split2({ a, b, left, right, width }) {
  return (
    <div className="flex gap-1">
      <div className="min-w-0 flex-1"><Label className="mb-px">{a}</Label>{left}</div>
      <div className={clsx('shrink-0', width)}><Label className="mb-px">{b}</Label>{right}</div>
    </div>
  );
}

function RightColumn() {
  return (
    <aside className="flex w-[224px] shrink-0 flex-col gap-[3px]">
      <Panel title="选择">
        <div className="px-[3px] pt-[3px] pb-1">
          <Label>经典</Label>
          <IconRow name="经典" icons={CLASSIC} className="justify-between pt-px" />
          <Label className="mt-1.5 mb-px">类似元素</Label>
          <Similar>
            <Tool label="Tree dim"><Tree dim /></Tool>
            <Tool label="Tree"><Tree /></Tool>
          </Similar>
        </div>
      </Panel>
      <Panel title="对齐 | 拉直 | 翻转 | 适合 | 堆栈">
        <div className="flex flex-col gap-[3px] px-[3px] py-0.5">
          <Split2
            a="拉直" b="适合网格" width="w-[88px]"
            left={<IconRow name="拉直" icons={[<Hash r={45} />, <Hash />, <Hash r={90} />, <Hatch />, <Block />, <Block v />, <Block v r={20} />]} />}
            right={<div className="flex justify-between"><IconRow name="适合网格" icons={[<FitGrid />, <FitGrid />, <FitGrid />]} /><Btn className="h-[18px] w-4">Px</Btn><Btn on className="h-[18px] w-[17px]">M</Btn></div>}
          />
          <Split2
            a="翻转" b="堆栈对称" width="w-9"
            left={<div className="flex items-center justify-between"><IconRow name="翻转" className="w-[148px] justify-between" icons={[<FlipI x={1.500} />, <FlipI />, <FlipI x={16.500} />, <FlipI r={90} x={2} />, <FlipI r={90} />, <FlipI r={90} x={16} />]} /><Select label="翻转" value="本地" className="w-[27px]" /></div>}
            right={<IconRow name="堆栈对称" icons={[<StackI />, <StackI />]} />}
          />
          <Split2
            a="对齐" b="对齐元素" width="w-[54px]"
            left={<div className="flex items-center justify-between"><IconRow name="对齐" className="w-[138px] justify-between" icons={[<AlignI />, <AlignI x={9} />, <AlignI x={15} />, <AlignI r={90} />, <AlignI x={9} r={90} />, <AlignI r={-90} />]} /><Btn className="h-[18px] w-[18px]">粉碎</Btn></div>}
            right={<IconRow name="对齐元素" icons={[<MatchI />, <ArrowI />, <ArrowI r={-90} />]} />}
          />
          <div className="flex gap-3">
            <div className="w-[110px]"><Label className="mb-px">分配</Label><IconRow name="分配" icons={[<SpreadI dx={-5} />, <SpreadI dx={-2} />, <SpreadI />, <SpreadI r={90} dx={-5} />, <SpreadI r={90} dx={-2} />, <SpreadI r={90} />]} /></div>
            <div className="w-[64px]"><Label className="mb-px">分配空间</Label><div className="flex items-center"><IconRow name="分配空间" icons={[<SpaceI />, <SpaceI r={-90} />]} /><Select label="分配空间" value="可用" className="flex-1" /></div></div>
            <div className="flex-1"><Label className="mb-px">群组</Label><Btn on className="h-[18px] w-full">启用</Btn></div>
          </div>
          <div>
            <Label className="mb-px">类似元素</Label>
            <Similar><Tool label="Layers"><Layers /></Tool></Similar>
          </div>
        </div>
      </Panel>
      <div className="flex flex-col gap-0.5 pt-px">
        {COLLAPSED.map((t) => (
          <button key={t} className="h-4 bg-[#151515] pl-0.5 text-left text-[8px] font-bold text-[#b5b5b5]">{t}</button>
        ))}
      </div>
    </aside>
  );
}

/* ---------- bottom ---------- */

const TICKS = ['0', '0.1176', '0.2353', '0.3529', '0.4706', '0.5882', '0.7059', '0.8235', '0.9412', '1.059', '1.176', '1.294', '1.412', '1.529', '1.647', '1.765', '1.882', '2'];

function StatusBar() {
  return (
    <div className="flex h-[29px] shrink-0 items-center bg-[#303030] text-[7px] text-[#bdbdbd]">
      <span className="ml-1.5 size-2 bg-[#e84400]" />
      <div className="ml-[5px] flex h-[25px] w-[129px] flex-col justify-center gap-px bg-[#1b1b1b] pl-px leading-3">
        <p>ISLANDS</p>
        <p>已选择: 0 | 隐藏: 3 | 总计: 5</p>
      </div>
      <Select label="元素延伸" value="元素延伸" className="ml-2 h-[26px] w-10" />
      <div className="ml-[13px] min-w-0 flex-1 self-start pt-px">
        <div className="h-[11px] bg-linear-to-r from-[#c90000] via-[#7d7472] to-[#0058c8] text-center leading-[11px]">Stretch</div>
        <div className="flex justify-between pt-px leading-[9px]">
          {TICKS.map((t) => <span key={t} className="flex w-0 justify-center">{t}</span>)}
        </div>
      </div>
      <div className="mr-1 ml-[9px] w-[73px]">
        <Label>支持</Label>
        <div className="flex justify-between pt-0.5">
          <Btn className="h-[13px] w-[18px]">Bug</Btn>
          <Btn className="h-[13px] w-6">F. 请求</Btn>
          <Btn className="h-[13px] w-[25px]">新版本</Btn>
        </div>
      </div>
    </div>
  );
}

const U = 'size-3.5';
const TASKS = [
  ['Start', <Svg className="size-3"><path d="M2 4l6-1v5.500H2zM9 3l7-1v6.500H9zM2 9.500h6V15l-6-1zM9 9.500h7V16l-7-1z" fill="#eee" /></Svg>],
  ['Cortana', <Svg className={U}><path d="M3 4l6-2 6 2-6 3zM3 4v4l6 3 6-3M3 10v4l6 3 6-3" stroke="#2f8cc0" strokeWidth="1.300" /></Svg>],
  ['Notes', <Svg className={U}><rect x="1" y="2" width="16" height="14" fill="#1697dc" /><rect x="6" y="6" width="6" height="7" rx="1.500" stroke="#fff" strokeWidth="1.300" /><path d="M8 9h3" stroke="#fff" /></Svg>],
  ['Explorer', <Svg className={U}><path d="M1 3h6l2 2h8v11H1z" fill="#efb93c" /><path d="M1 7h16v6H1z" fill="#f8dc83" /><path d="M4 10h10v6h-2v-3H6v3H4z" fill="#3b90cf" /></Svg>, true],
  ['Shapes', <Svg className={U}><path d="M2 0h7v9l-7 0z" fill="#2e73c9" /><path d="M9 0h7v9H9z" fill="#e6b92d" /><path d="M2 9h7v4l-7 5z" fill="#c7382d" /><path d="M9 9h7v9l-7-5z" fill="#3da44b" /></Svg>],
  ['Globe', <Svg className={U}><circle cx="9" cy="9" r="8" fill="#b8dbe9" /><path d="M5 2c8 2 2 6 8 9l-3 6c-3-1-2-6-6-7z" fill="#317ba5" /></Svg>],
  ['Sketch', <Svg className={U}><rect width="18" height="18" fill="#fff" /><path d="M4 9l2 4 3-5 1 4 4-6M13 3l1 3" stroke="#222" strokeWidth="1.500" /></Svg>],
  ['Chrome', <Svg className={U}><circle cx="9" cy="9" r="8" fill="#e0a92b" /><path d="M9 9L2 5a8 8 0 0 1 14 0z" fill="#d63c2f" /><path d="M9 9L2 5a8 8 0 0 0 6 12z" fill="#31934b" /><circle cx="9" cy="9" r="3.500" fill="#3f7fe0" stroke="#fff" /></Svg>],
  ['Bird', <Svg className={U}><path d="M9 1C2 2 0 9 3 15l5 1z" fill="#21a8dd" /><path d="M9 3l8 13h-5L7 8z" fill="#1680bd" /><path d="M6 7l1 7" stroke="#dff" /></Svg>],
  ['Music', <Svg className={U}><rect width="18" height="18" rx="3" fill="#d3202f" /><path d="M7 5a5 5 0 1 0 6 1.500" stroke="#fff" strokeWidth="1.400" /><circle cx="9.500" cy="10" r="2" stroke="#fff" strokeWidth="1.300" /><path d="M11.500 10l-1-5q0-2 2.500-1" stroke="#fff" strokeWidth="1.300" /></Svg>, true],
  ['Avatar', <Svg className={U}><circle cx="9" cy="9" r="8.500" fill="#8d7769" /><circle cx="9" cy="9" r="5.500" fill="#d5b8a4" /><path d="M2 6q6-7 13 0" stroke="#473f3f" strokeWidth="2" /><path d="M6 8h2M11 8h1M7 12h4" stroke="#533" /></Svg>, true],
  ['Modeler', <Svg className={U}><rect width="18" height="18" fill="#191919" /><path d="M1 1l5 4 1-4 3 5 7-4-2 7-1 5-5 3-6-4 4-1-6-4 5 1z" fill="#ddd" /><path d="M6 9l4 2 4-3" stroke="#333" /></Svg>, true],
  ['Photos', <Svg className={U}><rect y="2" width="18" height="14" fill="#2a8ae0" /><path d="M0 15l7-8 4 4 2-2 5 6v1H0z" fill="#143c7a" /><circle cx="13" cy="6" r="1.500" fill="#fff" /></Svg>, true],
  ['Modeler 2', <Svg className={U}><rect width="18" height="18" fill="#191919" /><path d="M1 1l5 4 1-4 3 5 7-4-2 7-1 5-5 3-6-4 4-1-6-4 5 1z" fill="#ddd" /><path d="M6 9l4 2 4-3" stroke="#333" /></Svg>, true],
  ['OBS', <Svg className={U}><circle cx="9" cy="9" r="7.700" fill="#25252a" stroke="#bbb" /><path d="M9 9c-4-1-3-5 0-5M9 9c4-2 5 2 4 4M9 9c0 4-5 3-5 1" stroke="#aaa" strokeWidth="2" /></Svg>, true],
  ['RizomUV', <Svg className={U}><path d="M5 4a6 6 0 1 0 8 0" stroke="#d44a20" strokeWidth="3.500" /></Svg>, true],
];

function Taskbar() {
  return (
    <div className="flex h-[23px] shrink-0 items-center bg-[#213050] text-white">
      <div className="flex h-full w-[441px] shrink-0">
        {TASKS.map(([name, icon, open]) => (
          <button key={name} aria-label={name} className={clsx('flex flex-1 items-center justify-center', name === 'RizomUV' && 'bg-[#4d566f]')}>
            <span className={clsx('flex h-full w-[23px] items-center justify-center border-b', open ? 'border-[#6fa8d8]' : 'border-transparent')}>{icon}</span>
          </button>
        ))}
      </div>
      <div className="ml-auto flex items-center gap-1">
        <ChevronUp size={9} />
        <Mic size={10} fill="#fff" />
        <Svg className="size-2.5"><path d="M6 2h5v5l5 3-2 6H3l-2-5 5-2z" fill="#e8b44a" /><path d="M2 5l5 5" stroke="#c33" strokeWidth="3" /></Svg>
        <Svg className="size-2.5"><path d="M6 1h6v4H6z" fill="#ddd" /><rect x="4" y="5" width="10" height="12" rx="2" fill="#e0a24a" /></Svg>
        <Svg className="size-2.5"><rect width="18" height="18" fill="#14210f" /><path d="M4 13V8a5 5 0 0 1 10 0v5M5 10v5M13 10v5" stroke="#69b82c" strokeWidth="2" /></Svg>
        <Monitor size={10} />
        <Volume2 size={10} />
        <span className="text-[8px]">中</span>
        <span className="ml-1 bg-white px-px text-[7px] leading-[9px] text-[#213050]">拼</span>
        <div className="ml-1.5 w-9 text-center text-[7px] leading-[10px]"><p>16:29</p><p>2022/5/19</p></div>
        <button aria-label="Notifications" className="relative mr-2.5 ml-2">
          <Svg className="size-[13px]"><path d="M1 2h14v10H8l-3 3v-3H1z" fill="#fff" /><path d="M4 5.500h8M4 8.500h6" stroke="#213050" strokeWidth="1.300" /></Svg>
          <span className="absolute top-[5px] left-[7px] size-2 rounded-full bg-[#333] text-[7px] leading-2">4</span>
        </button>
      </div>
      <span className="h-full w-[3px] border-l border-[#65708a]" />
    </div>
  );
}

const PLAYER = [
  ['Play', 'M5 3l10 6-10 6z'],
  ['Stop', 'M4 4h10v10H4z'],
  ['Previous', 'M4 4h2.500v4.500L14 4v10L6.500 9.500V14H4z'],
  ['Next', 'M14 4h-2.500v4.500L4 4v10l7.500-4.500V14H14z'],
  ['Eject', 'M9 3l6 7H3zM3 12h12v2.500H3z'],
];

function Player() {
  return (
    <footer className="shrink-0 bg-[#1e1e1e] text-[8px] text-[#7a7a7a]">
      <div className="flex h-[13px] items-center pr-[7px] pl-[3px]">
        <input aria-label="Seek" type="range" min="0" max="2522" defaultValue="583" className="h-0.5 flex-1 appearance-none bg-linear-to-r from-[#f0d800] from-23% to-[#484848] to-23% [&::-webkit-slider-thumb]:size-1.5 [&::-webkit-slider-thumb]:appearance-none [&::-webkit-slider-thumb]:rounded-full [&::-webkit-slider-thumb]:bg-white" />
        <Volume2 size={9} fill="#777" className="mr-1 ml-1.5" />
        <input aria-label="Volume" type="range" min="0" max="100" defaultValue="20" className="h-0.5 w-[47px] appearance-none bg-linear-to-r from-[#f0d800] from-20% to-black to-20% [&::-webkit-slider-thumb]:size-1.5 [&::-webkit-slider-thumb]:appearance-none [&::-webkit-slider-thumb]:rounded-full [&::-webkit-slider-thumb]:bg-white" />
      </div>
      <div className="flex h-7 items-center border-t border-black">
        {PLAYER.map(([name, d]) => (
          <button key={name} aria-label={name} className="flex h-full w-[27px] items-center justify-center border-r border-black [&+&]:w-[28px]">
            <svg viewBox="0 0 18 18" className="size-2.5"><path d={d} fill="#eee" /></svg>
          </button>
        ))}
        <p className="ml-[5px]"><span className="text-[#e0e0e0]">00:09:43</span> / 00:42:02</p>
        {['S/W', 'AVC1', 'AAC'].map((t) => <span key={t} className="ml-[3px] bg-[#2b2b2b] px-0.5 leading-[10px]">{t}</span>)}
        <div className="ml-auto flex items-center gap-2.5 pr-2.5">
          <button aria-label="360 degrees" className="flex flex-col items-center text-[7px] leading-[7px]">
            360°
            <svg viewBox="0 0 12 4" className="h-1 w-3" fill="none"><path d="M0 0q6 4 12 0M5 1l2 1-2 1" stroke="#7a7a7a" /></svg>
          </button>
          <button className="border-b border-[#777] leading-[9px]">3D</button>
          <button aria-label="Playlist search"><TextSearch size={12} color="#f0d800" strokeWidth={3} /></button>
          <button aria-label="Notes"><Svg className="size-[9px]"><rect width="18" height="18" rx="3" fill="#f0d800" /><path d="M5 6h8M5 9h8M5 12h8" stroke="#1e1e1e" strokeWidth="1.500" /></Svg></button>
          <button aria-label="Settings"><Settings size={10} color="#999" strokeWidth={3} /></button>
        </div>
        <button aria-label="Menu" className="flex h-full w-7 items-center justify-center border-l border-black"><Menu size={11} color="#ccc" /></button>
      </div>
    </footer>
  );
}

export default function App() {
  return (
    <div className="flex min-h-screen flex-col bg-black pr-0.5 font-['Noto_Sans','Noto_Sans_CJK_SC',sans-serif]">
      <TitleBar />
      <div className="flex flex-1 flex-col gap-[3px] bg-[#1b1b1b]">
        <div className="flex h-20 shrink-0 gap-[3px] overflow-hidden">
          <SeamPanel />
          <UnfoldPanel />
          <PackPanel />
          <SideTab>排列属性[全局]</SideTab>
          <SideTab>元素组</SideTab>
          <TexturePanel />
          <SideTab>控制</SideTab>
          <SideTab>脚本中心</SideTab>
        </div>
        <main className="flex flex-1 gap-[3px]">
          <LeftTools />
          <div className="flex min-w-0 flex-1 gap-1.5">
            <View3D />
            <div className="flex min-w-0 flex-1 flex-col gap-[3px]">
              <ViewUV />
              <TransformPanel />
            </div>
          </div>
          <RightColumn />
        </main>
        <StatusBar />
        <p className="h-[13px] shrink-0 bg-[#7e1e00] text-[7px] leading-[13px] text-[#340d00]">Camera distance to focus point: 82.435922. To near plane: 0.824359. To far plane: 824.359223</p>
      </div>
      <Taskbar />
      <div className="h-4 shrink-0 bg-black" />
      <Player />
    </div>
  );
}
